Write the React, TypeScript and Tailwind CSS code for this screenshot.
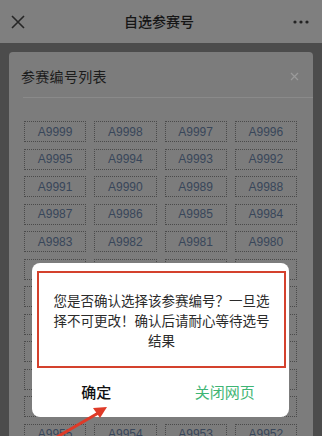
import React from 'react';

const codes = Array.from({ length: 48 }, (_, i) => `A${9999 - i}`);

export default function App() {
  return (
    <div
      className="relative w-[322px] h-[436px] overflow-hidden bg-[#4c4c4c]"
      style={{ fontFamily: '"Noto Sans CJK SC", "Noto Sans", sans-serif' }}
    >
      {/* top bar */}
      <div className="h-[43px] bg-[#7f7f7f] flex items-center justify-between px-[10px]">
        <svg width="14" height="14" viewBox="0 0 14 14" className="ml-[1px]">
          <path d="M1 1L13 13M13 1L1 13" stroke="#262626" strokeWidth="1.6" />
        </svg>
        <span className="text-[14px] text-[#161616] font-medium">自选参赛号</span>
        <svg width="16" height="4" viewBox="0 0 16 4" className="mr-[3px]">
          <circle cx="2" cy="2" r="1.6" fill="#222" />
          <circle cx="8" cy="2" r="1.6" fill="#222" />
          <circle cx="14" cy="2" r="1.6" fill="#222" />
        </svg>
      </div>

      {/* list panel */}
      <div className="mx-[9px] mt-[9px] rounded-[4px] bg-[#7c7c7c] h-[420px]">
        <div className="flex items-center justify-between pl-[12px] pr-[14px] pt-[14px] h-[34px]">
          <span className="text-[14px] text-[#1c1c1c] tracking-[0.3px]">参赛编号列表</span>
          <svg width="9" height="9" viewBox="0 0 9 9">
            <path d="M1 1L8 8M8 1L1 8" stroke="#9a9a9a" strokeWidth="1.3" />
          </svg>
        </div>
        <div className="ml-[14px] mt-[11px] h-px bg-[#8a8a8a]" />
        <div className="grid grid-cols-4 gap-x-[8px] gap-y-[6.5px] pl-[15px] pr-[16px] pt-[23px]">
          {codes.map((c) => (
            <div
              key={c}
              className="h-[21px] border border-dotted border-[#4a4a4a] flex items-center justify-center text-[12px] text-[#38465a]"
              style={{ fontFamily: '"Liberation Sans", Arial, sans-serif' }}
            >
              {c}
            </div>
          ))}
        </div>
      </div>

      {/* confirm dialog */}
      <div className="absolute left-[32px] top-[263px] w-[257px] h-[154px] bg-white rounded-[8px] flex flex-col">
        <div className="ml-[5px] mr-[3px] mt-[8px] h-[97px] border-2 border-[#d4412d] flex items-center justify-center">
          <p className="w-[222px] text-center text-[13.5px] leading-[20px] text-[#2b2b2b]">
            您是否确认选择该参赛编号？一旦选择不可更改！确认后请耐心等待选号结果
          </p>
        </div>
        <div className="flex flex-1">
          <button className="flex-1 text-[15px] font-medium text-[#111]">确定</button>
          <button className="flex-1 text-[15px] text-[#3fb575]">关闭网页</button>
        </div>
      </div>

      {/* red arrow */}
      <svg className="absolute left-0 top-0" width="322" height="436" viewBox="0 0 322 436">
        <path d="M57 437L100 412" stroke="#df3a28" strokeWidth="3" strokeLinecap="round" />
        <path d="M107 407L93 408L100 418Z" fill="#df3a28" />
      </svg>
    </div>
  );
}
